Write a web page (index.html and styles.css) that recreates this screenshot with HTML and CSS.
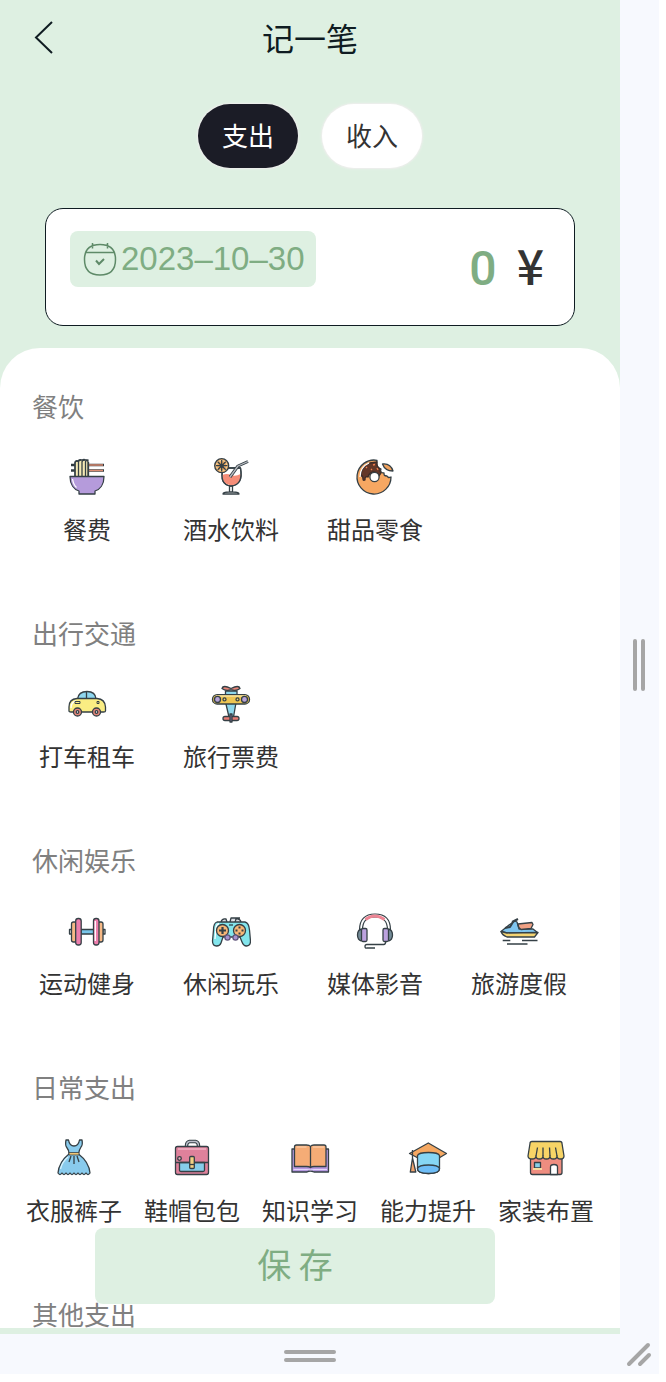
FILE: index.html
```html
<!DOCTYPE html>
<html lang="zh-CN">
<head>
<meta charset="utf-8">
<meta name="viewport" content="width=device-width, initial-scale=1">
<title>记一笔</title>
<link rel="stylesheet" href="styles.css">
</head>
<body>
<div class="stage">
  <main class="app">
    <header class="topbar">
      <button class="back" type="button" aria-label="返回">
        <svg viewBox="0 0 24 36" width="24" height="36"><path d="M20 3 4 18.500 20 34" fill="none" stroke="#0f1c22" stroke-width="2"/></svg>
      </button>
      <h1 class="title">记一笔</h1>
    </header>

    <div class="tabs">
      <button class="tab tab-active" type="button">支出</button>
      <button class="tab" type="button">收入</button>
    </div>

    <section class="entry">
      <button class="date" type="button">
        <svg class="date-icon" viewBox="0 0 36 36" width="36" height="36" fill="none" stroke="#5e8a68" stroke-width="1.500"><path d="M18 3.500C8 3.500 2.500 8.500 2.500 18.500S8 34 18 34s15.500-5.500 15.500-15.500S28 3.500 18 3.500ZM4 11.500h28M10.500 2v5.500M25.500 2v5.500"/><path d="m14 19.500 3 3.500 5-5" stroke-width="2"/></svg>
        <span>2023–10–30</span>
      </button>
      <p class="amount"><span class="value">0</span><span class="yen">¥</span></p>
    </section>

    <div class="sheet">
      <section class="group">
        <h2 class="group-title">餐饮</h2>
        <div class="items">
          <button class="item" type="button">
            <svg class="icon" viewBox="0 0 40 40"><path d="M4 8h33M4 13.500h33" stroke="#303b40" stroke-width="2.600"/><path d="M20 8h16M20 13.500h16" stroke="#dc8c72" stroke-width="1.400"/><path d="M8 20V6q0-3 3-2 1-2 4-1 2-1 4 0 2 0 2 2v15" fill="#f4e9b5"/><path d="M8 19V6q0-2 3-2M11.500 19V5q0-2 3-2M15 19V5q0-2 3-2M18.500 19V5q0-2 3-2M21.500 19V5"/><path d="M3 19.500h34c0 8-4 13-9 14.500V37H12v-3C7 32.500 3 27.500 3 19.500Z" fill="#b59bdb"/><path d="M5.500 22q1 6 4 8.500" stroke="#fff"/></svg>
            <span>餐费</span>
          </button>
          <button class="item" type="button">
            <svg class="icon" viewBox="0 0 40 40"><path d="M12 11h17.500q3 17-9.500 18Q8 28 12 11Z" fill="#fff"/><path d="M11.500 18q4-2 8.500 0t9.500-1q1 10.500-9.500 11.500-9-1-8.500-10.500Z" fill="#f58d78" stroke="none"/><path d="M12 11h17.500q3 17-9.500 18Q8 28 12 11ZM18.500 29v6M21.500 29v6M12 37q0-2 6-2h4q6 0 6 2Z"/><path d="m19 20 8-11 10-4.500" stroke-width="3"/><path d="m19 20 8-11 10-4.500" stroke="#b8bbc1"/><circle cx="10.700" cy="8.700" r="7" fill="#edaa62"/><circle cx="10.700" cy="8.700" r="5.200" stroke="#f5d6a2" stroke-width="1"/><path d="M10.700 3v11.500M5 8.700h11.500M6.700 4.700l8 8M14.700 4.700l-8 8" stroke-width="1.300"/><circle cx="10.700" cy="8.700" r="2" fill="#354046" stroke="none"/></svg>
            <span>酒水饮料</span>
          </button>
          <button class="item" type="button">
            <svg class="icon" viewBox="0 0 40 40"><path d="M22 3.300A17 17 0 1 0 36 20c-2 1-3 1-4-1-3 0-3-1-3-3-3 0-4-2-3-4-3-1-5-4-4-8.700Z" fill="#f6a762"/><path d="M6 19q0-9 9-13l7-1q-1 4 3 7-1 2 1 4l-2 3q-2-4-6-4-4 1-5 5-3-1-3 2v1q-2 1-2-1l-.5-3Z" fill="#633728" stroke="#3c2c28"/><path d="M5 20q0-10 9-14" stroke="#fff"/><path d="m11 11 1-1M16 12l1 1M18 8l2-.5M22 11l1 2" stroke="#ef7f50"/><circle cx="19.500" cy="20" r="4.600" fill="#fff"/><path d="M27.500 7q8-1 10.500 7-8 0-10.500-7Z" fill="#f0a15d"/></svg>
            <span>甜品零食</span>
          </button>
        </div>
      </section>

      <section class="group">
        <h2 class="group-title">出行交通</h2>
        <div class="items">
          <button class="item" type="button">
            <svg class="icon" viewBox="0 0 40 40"><path d="M10.500 15q1-7.500 9.500-7.500T29 15Z" fill="#8ed6ef"/><path d="M19.500 8v7M2 27V23q0-8 8-8.500h20q8 .500 8.500 8.500v4q0 1-2 1H4q-2 0-2-1Z" fill="#faed83"/><path d="M4 24q0-6 5-7" stroke="#fff"/><path d="M8 17.500h5v2H8zM30 17.500h2v2h-2z" stroke-width="1"/><g fill="#e58679"><circle cx="10.500" cy="28" r="4"/><circle cx="29.500" cy="28" r="4"/></g><g fill="#fff"><circle cx="10.500" cy="28" r="1.300"/><circle cx="29.500" cy="28" r="1.300"/></g></svg>
            <span>打车租车</span>
          </button>
          <button class="item" type="button">
            <svg class="icon" viewBox="0 0 40 40"><path d="M14.500 7h11.500v6l-3.500 20h-4.500L14.500 18Z" fill="#8ed8ed"/><path d="M20 4.500q-8-4-9 0 4 3 9 1 5 2 9-1-1-4-9 0Z" fill="#e88679"/><rect x="1.500" y="10.700" width="37" height="9.300" rx="4.600" fill="#edc553"/><path d="M5 12h30" stroke="#fae8a8"/><g fill="#b8a4d9"><circle cx="6.500" cy="15.400" r="3"/><circle cx="33.500" cy="15.400" r="3"/></g><g fill="#f8d66c"><circle cx="13.500" cy="15.400" r="1.500"/><circle cx="26.500" cy="15.400" r="1.500"/></g><rect x="12" y="32.500" width="16" height="4" rx="2" fill="#e77d75"/><path d="M19 30h2v8h-2z" fill="#80739a"/></svg>
            <span>旅行票费</span>
          </button>
        </div>
      </section>

      <section class="group">
        <h2 class="group-title">休闲娱乐</h2>
        <div class="items">
          <button class="item" type="button">
            <svg class="icon" viewBox="0 0 40 40"><path d="M14 18.500h13V23H14z" fill="#78c5e9"/><path d="M2.500 18.500h2V23h-2zM36 18.500h2V23h-2z" fill="#fff"/><g fill="#f6b986"><rect x="4.500" y="11" width="5" height="20" rx="2"/><rect x="31" y="11" width="5" height="20" rx="2"/></g><g fill="#ed7eac"><rect x="8.700" y="7.500" width="5.500" height="26.500" rx="2.500"/><rect x="26.500" y="7.500" width="5.500" height="26.500" rx="2.500"/></g><path d="M28.300 10v20" stroke="#fff"/></svg>
            <span>运动健身</span>
          </button>
          <button class="item" type="button">
            <svg class="icon" viewBox="0 0 40 40"><path d="M10 11q1-4 5-3l1 3M24 11l1-3q4-1 5 3M19 11l1-4h9" fill="#d8dbe2"/><path d="M6 11h28q4 1 4.500 8l1 11q0 5-4 5-3 0-4.500-4L29 26H12l-2 6q-1 3-4.500 3-4 0-4-5l1-11q0-7 3.500-8Z" fill="#83e5ec"/><path d="M4 28 5 16q1-3 3-3.500" stroke="#fff"/><g fill="#f8b777"><circle cx="11.500" cy="19.500" r="6"/><circle cx="28.500" cy="19.500" r="6"/></g><path d="M11.500 16v7M8 19.500h7" stroke-width="2.200"/><path d="M28.500 15.500v2M28.500 21.500v2M24.500 19.500h2M30.500 19.500h2" stroke-width="2"/><path d="M18 14h4" /><g fill="#a591cf" stroke="#61567a"><circle cx="16.500" cy="26.500" r="2.600"/><circle cx="24.500" cy="26.500" r="2.600"/></g></svg>
            <span>休闲玩乐</span>
          </button>
          <button class="item" type="button">
            <svg class="icon" viewBox="0 0 40 40"><path d="M6 19Q6 4.500 20 4.500T34 19" stroke-width="4.200"/><path d="M6 19Q6 4.500 20 4.500T34 19" stroke="#fff" stroke-width="1.800"/><path d="M10.500 8.500q9-7 19 0" stroke="#ed8594" stroke-width="3"/><path d="M6.500 18q-4 1-4 6t4 6M33.500 18q4 1 4 6t-4 6" fill="#748c98"/><g fill="#bca2df"><rect x="6.500" y="17.500" width="5.500" height="13" rx="1.500"/><rect x="28" y="17.500" width="5.500" height="13" rx="1.500"/></g><path d="M30.700 30.500q0 3-2 3H12q-2 0-2 2t2 1.500h8"/></svg>
            <span>媒体影音</span>
          </button>
          <button class="item" type="button">
            <svg class="icon" viewBox="0 0 40 40"><path d="m2 20.500 8-6.500 6-4 2 1 2 7h14l4.500 3.500-5 .500H8Z" fill="#7fc5ef"/><path d="m2 20.500 6 1.500 31-.500-3.500 4.500H8Q3 24 2 20.500Z" fill="#f5d472"/><path d="m19 13 14-1.500 1 2-2 4-10 1q-3-2-3-5.500Z" fill="#f0a184"/><path d="m13 11 6-3M6 17l5-1 3-5" stroke-width="2"/><path d="M3.700 29.500h7.600M23 29.500h15.500M8 33h20.500"/></svg>
            <span>旅游度假</span>
          </button>
        </div>
      </section>

      <section class="group">
        <h2 class="group-title">日常支出</h2>
        <div class="items">
          <button class="item" type="button">
            <svg class="icon" viewBox="0 0 40 40"><path d="M12 2h2.500q1 6 5.500 6t5.500-6H28q1 5-1 7-2 3-2.500 7Q35 24 36 35q-2 3-4 0-2 3-4 0-2 3-4 0-2 3-4 0-2 3-4 0-2 3-4 0-2 3-4 0-2 3-4 0Q5 24 15 16q0-4-2.500-7-1.500-2-.500-7Z" fill="#89cbed"/><path d="M14 19q-6 5-7.500 12" stroke="#d7f2fc"/><path d="M15 14.500h10v2.500H15z" fill="#f3c775" stroke-width=".800"/><path d="m17 18-2 6M20 18v8M23 18l2 6"/></svg>
            <span>衣服裤子</span>
          </button>
          <button class="item" type="button">
            <svg class="icon" viewBox="0 0 40 40"><path d="M14.500 8q0-4 3-4.500h6q3 .500 3 4.500" stroke-width="3.500"/><path d="M14.500 8q0-4 3-4.500h6q3 .500 3 4.500" stroke="#bdc0cc"/><rect x="3.500" y="8.500" width="33" height="28" rx="2" fill="#df819b"/><path d="M7.500 24.500h25V32q0 1.500-1.500 1.500H9q-1.500 0-1.500-1.500Z" fill="#86cdea"/><path d="M3.500 24.500h33"/><path d="M6 11h28" stroke="#f5bccb"/><rect x="17.700" y="18.500" width="4.600" height="12" rx="1" fill="#f3d183"/><path d="M18 26.500h4"/><circle cx="7.500" cy="20.500" r="1.800" fill="#e9a8b7"/></svg>
            <span>鞋帽包包</span>
          </button>
          <button class="item" type="button">
            <svg class="icon" viewBox="0 0 40 40"><path d="M2 11h36.500v23H24q-4-2-7 0H2Z" fill="#b69ae1"/><path d="M4.500 9q0-2 2-2h10q3 0 4 1.500Q21.500 7 24 7h10q2 0 2 2v19.500H24q-2.500 0-3.500 1-1-1-4-1h-12Z" fill="#f5ac76"/><path d="M20.500 9v20"/><path d="M6.500 9h10M23 9h11" stroke="#ffd5b5" stroke-width="1"/><path d="M3.500 31.500H17q3.500 1 7 0h13" stroke="#e4d6fa" stroke-width="1"/></svg>
            <span>知识学习</span>
          </button>
          <button class="item" type="button">
            <svg class="icon" viewBox="0 0 40 40"><path d="M20.300 5 38.500 15.500 31 20H10l-8.500-4.500Z" fill="#f5a862"/><path d="M9.500 31V17.500q1-3 11-3t11 3V31q0 4.500-11 4.500T9.500 31Z" fill="#86d6f5"/><path d="M9.500 30.500q1-3.500 11-3.500t11 3.500q0 5-11 5t-11-5Z" fill="#6ebdf7"/><path d="M4.500 12v10M4.500 20 2.300 34h5.500Z" fill="#f1a36c"/></svg>
            <span>能力提升</span>
          </button>
          <button class="item" type="button">
            <svg class="icon" viewBox="0 0 40 40"><path d="M4.500 17h31.500v17.500q0 2-2 2H6.500q-2 0-2-2Z" fill="#ee8d80"/><path d="M6 3.500h28q2 0 2 2L38 18q0 3-3.500 3T31 18q0 3-3.600 3T24 18q0 3-3.600 3T17 18q0 3-3.500 3T10 18q0 3-4 3t-4-3L4 5.500q0-2 2-2Z" fill="#f7d466"/><path d="M11.500 9.500 10 18M17 9.500V18M23.500 9.500 24 18M29.500 9.500 31 18"/><path d="M8.500 24.500h6V30h-6z" fill="#87cfe8"/><path d="M7 31h9" stroke="#f8dca0" stroke-width="2"/><path d="M24.500 36.500V29q0-2.500 3.500-2.500t3.500 2.500v7.500Z" fill="#fff"/></svg>
            <span>家装布置</span>
          </button>
        </div>
      </section>

      <section class="group">
        <h2 class="group-title">其他支出</h2>
      </section>
    </div>
    <button class="save" type="button">保 存</button>
  </main>

  <div class="handle handle-right"><svg viewBox="0 0 12 52" width="12" height="52"><path d="M2 2v48M10 2v48"/></svg></div>
  <div class="handle handle-bottom"><svg viewBox="0 0 52 12" width="52" height="12"><path d="M2 2h48M2 10h48"/></svg></div>
  <div class="handle"><svg viewBox="0 0 26 26" width="26" height="26"><path d="M3 23 22 4M14 23l9-9"/></svg></div>
</div>
</body>
</html>
```
FILE: styles.css
```css
* {
  box-sizing: border-box;
}

body {
  margin: 0;
  padding: 0 7px 8px 0;
  background: #fff;
  color: #333;
  font-family: "Noto Sans CJK SC", sans-serif;
}

button {
  margin: 0;
  padding: 0;
  border: 0;
  background: none;
  color: inherit;
  font: inherit;
  cursor: pointer;
}

h1,
h2,
p {
  margin: 0;
  font-weight: 400;
}

.stage {
  display: grid;
  grid-template-columns: minmax(0, 1fr) 39px;
  grid-template-rows: minmax(0, 1fr) 40px;
  height: calc(100vh - 8px);
  background: #f7f9fe;
}

.app {
  position: relative;
  display: flex;
  flex-direction: column;
  padding-bottom: 6px;
  background: #def0e2;
}

.topbar {
  display: grid;
  grid-template-columns: 64px 1fr 64px;
  align-items: center;
  height: 74px;
}

.back {
  display: flex;
  justify-content: flex-end;
  padding-right: 8px;
}

.title {
  color: #0f1c22;
  font-size: 32px;
  line-height: 48px;
  text-align: center;
}

.tabs {
  display: flex;
  justify-content: center;
  gap: 24px;
  padding-top: 30px;
}

.tab {
  width: 100px;
  height: 64px;
  padding-bottom: 2px;
  border-radius: 32px;
  background: #fff;
  box-shadow: 0 0 2px 1px #f0eeee;
  font-size: 26px;
  line-height: 36px;
}

.tab-active {
  background: #1b1c26;
  color: #fff;
}

.entry {
  display: flex;
  justify-content: space-between;
  align-items: flex-start;
  margin: 40px 45px 22px;
  padding: 22px 30px 22px 24px;
  height: 118px;
  border: 1px solid #0f1c22;
  border-radius: 18px;
  background: #fff;
}

.date {
  display: flex;
  align-items: center;
  gap: 3px;
  height: 56px;
  padding: 0 11px 0 12px;
  border-radius: 8px;
  background: #def0e2;
  color: #7fad83;
  font-family: "Liberation Sans", Arial, sans-serif;
  font-size: 33px;
  line-height: 40px;
}

.amount {
  display: flex;
  align-items: baseline;
  gap: 20px;
  font-size: 48px;
  font-weight: 500;
  line-height: 66px;
}

.value {
  color: #7fad83;
  font-family: Roboto, "Noto Sans CJK SC", sans-serif;
}

.sheet {
  flex: 1;
  min-height: 0;
  overflow-y: auto;
  scrollbar-width: none;
  padding: 44px 15px 0;
  border-radius: 40px 40px 0 0;
  background: #fff;
}

.group {
  display: flex;
  flex-direction: column;
  gap: 37px;
  margin-bottom: 72px;
}

.group:last-child {
  margin-bottom: 0;
}

.group-title {
  padding-left: 17px;
  color: #808080;
  font-size: 26px;
  line-height: 28px;
}

.items {
  display: flex;
}

.item {
  display: flex;
  flex: 0 1 144px;
  flex-direction: column;
  align-items: center;
  gap: 14px;
  min-width: 0;
  font-size: 24px;
  line-height: 36px;
  white-space: nowrap;
}

.icon {
  width: 40px;
  height: 40px;
  fill: none;
  stroke: #354046;
  stroke-width: 1.3;
  stroke-linejoin: round;
}

.save {
  position: absolute;
  right: 125px;
  bottom: 30px;
  left: 95px;
  height: 76px;
  padding-bottom: 4px;
  border-radius: 8px;
  background: #def0e2;
  color: #7fad83;
  font-size: 34px;
  line-height: 48px;
}

.handle {
  display: flex;
  align-items: center;
  justify-content: center;
  padding-right: 2px;
  fill: none;
  stroke: #a6a6a6;
  stroke-width: 4;
  stroke-linecap: round;
}

.handle-right {
  padding-bottom: 4px;
}

.handle-bottom {
  padding-top: 4px;
  padding-right: 0;
}
```
